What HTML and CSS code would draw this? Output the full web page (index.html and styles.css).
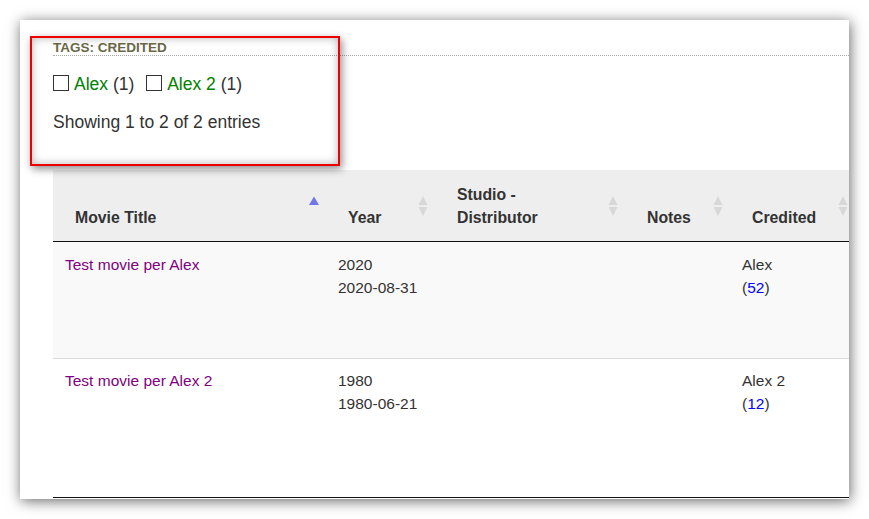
FILE: index.html
```html
<!DOCTYPE html>
<html>
<head>
<meta charset="utf-8">
<link rel="stylesheet" href="styles.css">
</head>
<body>
<div class="card">
  <div class="tags">
    <div class="tags-title">TAGS: CREDITED</div>
    <div class="tag-row">
      <span class="tag"><span class="box"></span><a class="tag-name">Alex</a> (1)</span>
      <span class="tag"><span class="box"></span><a class="tag-name">Alex 2</a> (1)</span>
    </div>
    <div class="info">Showing 1 to 2 of 2 entries</div>
  </div>

  <table class="grid">
    <colgroup>
      <col class="c1"><col class="c2"><col class="c3"><col class="c4"><col class="c5">
    </colgroup>
    <thead>
      <tr>
        <th>Movie Title<svg class="sort" viewBox="0 0 10 20" width="10" height="20"><polygon points="5,0.5 10,9 0,9" fill="#7377e6"/></svg></th>
        <th>Year<svg class="sort" viewBox="0 0 10 20" width="10" height="20"><polygon points="5,0 9.5,9 0.5,9" fill="#d8d8d8"/><polygon points="0.5,11 9.5,11 5,20" fill="#d8d8d8"/></svg></th>
        <th>Studio -<br>Distributor<svg class="sort" viewBox="0 0 10 20" width="10" height="20"><polygon points="5,0 9.5,9 0.5,9" fill="#d8d8d8"/><polygon points="0.5,11 9.5,11 5,20" fill="#d8d8d8"/></svg></th>
        <th>Notes<svg class="sort" viewBox="0 0 10 20" width="10" height="20"><polygon points="5,0 9.5,9 0.5,9" fill="#d8d8d8"/><polygon points="0.5,11 9.5,11 5,20" fill="#d8d8d8"/></svg></th>
        <th>Credited<svg class="sort" viewBox="0 0 10 20" width="10" height="20"><polygon points="5,0 9.5,9 0.5,9" fill="#d8d8d8"/><polygon points="0.5,11 9.5,11 5,20" fill="#d8d8d8"/></svg></th>
      </tr>
    </thead>
    <tbody>
      <tr class="odd">
        <td><a class="title">Test movie per Alex</a></td>
        <td>2020<br>2020-08-31</td>
        <td></td>
        <td></td>
        <td>Alex<br>(<a class="count">52</a>)</td>
      </tr>
      <tr class="even">
        <td><a class="title">Test movie per Alex 2</a></td>
        <td>1980<br>1980-06-21</td>
        <td></td>
        <td></td>
        <td>Alex 2<br>(<a class="count">12</a>)</td>
      </tr>
    </tbody>
  </table>

  <div class="highlight"></div>
</div>
</body>
</html>
```

FILE: styles.css
```css
html, body {
  margin: 0;
  padding: 0;
  background: #ffffff;
}

body {
  padding: 20px;
  font-family: "Liberation Sans", Arial, sans-serif;
  color: #333333;
}

.card {
  position: relative;
  width: 796px;
  height: 479px;
  padding-left: 33px;
  background: #ffffff;
  overflow: hidden;
  box-shadow: 1px 2px 13px rgba(0, 0, 0, 0.6);
}

.tags {
  padding-top: 20px;
}

.tags-title {
  font-size: 13.5px;
  line-height: 15px;
  font-weight: bold;
  color: #6b6848;
  border-bottom: 1px dotted #a8a8a8;
}

.tag-row {
  margin-top: 18px;
  font-size: 17.5px;
  line-height: 20px;
  color: #333333;
}

.tag {
  margin-right: 7px;
}

.box {
  display: inline-block;
  width: 14px;
  height: 14px;
  border: 1px solid #333333;
  margin-right: 5px;
  vertical-align: -1px;
}

.tag-name {
  color: #008000;
}

.info {
  margin-top: 18px;
  font-size: 17.5px;
  line-height: 20px;
  color: #333333;
}

.grid {
  margin-top: 38px;
  width: 802px;
  table-layout: fixed;
  border-collapse: separate;
  border-spacing: 0;
  border-bottom: 1px solid #111111;
  font-size: 15.5px;
  line-height: 23px;
}

.c1 { width: 273px; }
.c2 { width: 109px; }
.c3 { width: 190px; }
.c4 { width: 105px; }
.c5 { width: 125px; }

.grid th {
  position: relative;
  background: #eeeeee;
  text-align: left;
  vertical-align: bottom;
  font-size: 15.8px;
  font-weight: bold;
  color: #333333;
  padding: 13px 18px 12px 22px;
  border-bottom: 1px solid #111111;
}

.sort {
  position: absolute;
  right: 7px;
  top: 50%;
  margin-top: -10px;
}

.grid td {
  vertical-align: top;
  padding: 11px 12px 0 12px;
  color: #333333;
}

.odd td {
  height: 105px;
  background: #f9f9f9;
}

.even td {
  height: 128px;
  border-top: 1px solid #dddddd;
  padding-top: 10px;
  background: #ffffff;
}

.title {
  color: #800080;
}

.count {
  color: #0000ff;
}

.highlight {
  position: absolute;
  left: 10px;
  top: 16px;
  width: 306px;
  height: 126px;
  border: 2px solid #ee0000;
  box-shadow: 2px 3px 8px rgba(0, 0, 0, 0.45), inset 0 0 8px rgba(0, 0, 0, 0.3);
}
```
